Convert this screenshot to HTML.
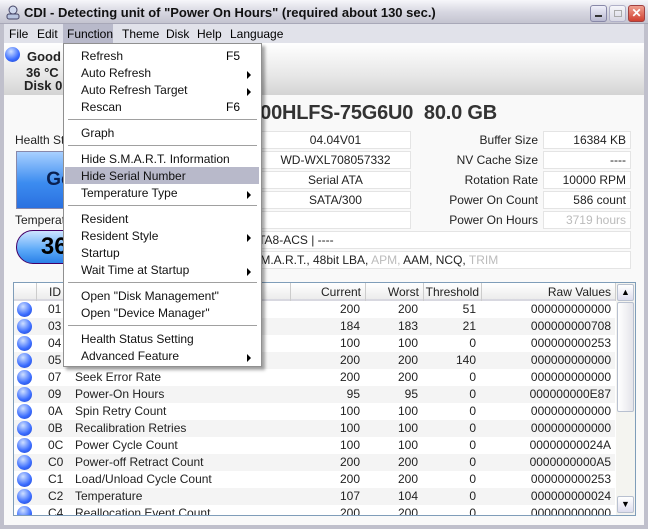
<!DOCTYPE html>
<html><head><style>
*{box-sizing:border-box;margin:0;padding:0}
body{width:648px;height:529px;overflow:hidden;font-family:"Liberation Sans",sans-serif;font-size:12px;color:#000;background:#fff;position:relative}
.a{position:absolute}
#frame{left:0;top:0;width:648px;height:529px;border:4px solid #c0c0cc;border-top:none;background:#f9f9f9}
#title{left:0;top:0;width:648px;height:24px;background:linear-gradient(#f6f6fa,#d8d8e2 50%,#c4c4d0);border-bottom:1px solid #a8a8b8}
#title span{position:absolute;left:24px;top:5px;font-weight:bold;font-size:13px;color:#111}
#menu{left:4px;top:24px;width:640px;height:19px;background:#e1e2ea}
#menu span{position:absolute;top:3px}
#dbar{left:4px;top:43px;width:640px;height:52px;background:linear-gradient(#fff,#e8e8e8 60%,#d4d4d4)}
.box{position:absolute;height:18px;border:1px solid #e4e4e4;background:#fff;text-align:center;line-height:16px;color:#222;font-size:12px}
.lbl{position:absolute;text-align:right;width:200px;color:#222}
#tbl{left:13px;top:282px;width:623px;height:234px;border:1px solid #7f9db9;background:#fff;overflow:hidden}
.hd{position:absolute;top:0;height:18px;line-height:18px;color:#222;border-right:1px solid #ccc;text-align:right;padding-right:4px;white-space:nowrap}
.row{position:absolute;left:0;width:601px;height:17px;line-height:17px;color:#222}
.row:nth-child(even){background:#f4f4f4}
.row span{position:absolute}
.dot{left:3px;top:1px;width:15px;height:15px;border-radius:50%;background:radial-gradient(circle at 40% 30%,#cfe0ff,#3a6cff 60%,#2040c0)}
#pop{left:63px;top:43px;width:199px;height:324px;background:#fff;border:1px solid #909090;box-shadow:3px 3px 3px rgba(0,0,0,.35)}
.mi{position:absolute;left:17px;color:#111}
.sep{position:absolute;left:4px;width:189px;height:1px;background:#a0a0a0}
.ar{position:absolute;left:183px;width:0;height:0;border-left:4px solid #000;border-top:4px solid transparent;border-bottom:4px solid transparent}
.k{position:absolute;left:162px}
</style></head><body>
<div id="frame" class="a"></div>
<div id="title" class="a">
<svg class="a" style="left:5px;top:4px" width="16" height="16"><circle cx="8" cy="6" r="4" fill="#cfd8ee" stroke="#446"/><rect x="2" y="10" width="12" height="5" rx="2" fill="#b8c4e0" stroke="#446"/></svg>
<span>CDI - Detecting unit of "Power On Hours" (required about 130 sec.)</span>
<div class="a" style="left:590px;top:5px;width:17px;height:17px;border-radius:3px;background:linear-gradient(#f0f0fa,#b8b8d0);border:1px solid #8888a8"><div class="a" style="left:4px;top:9px;width:7px;height:2px;background:#333"></div></div>
<div class="a" style="left:609px;top:5px;width:17px;height:17px;border-radius:3px;background:linear-gradient(#f6f6fa,#d8d8e4);border:1px solid #b0b0c8"><div class="a" style="left:4px;top:4px;width:8px;height:7px;border:1px solid #aaa"></div></div>
<div class="a" style="left:628px;top:5px;width:17px;height:17px;border-radius:3px;background:linear-gradient(#f0a090,#d04030);border:1px solid #a04040;color:#fff;font-weight:bold;font-size:12px;text-align:center;line-height:15px">✕</div>
</div>
<div id="menu" class="a">
<span style="left:5px">File</span><span style="left:33px">Edit</span>
<div class="a" style="left:59px;top:0;width:50px;height:19px;background:#b8b9ca"></div>
<span style="left:63px">Function</span><span style="left:118px">Theme</span><span style="left:162px">Disk</span><span style="left:193px">Help</span><span style="left:226px">Language</span>
</div>
<div id="dbar" class="a">
<div class="a" style="left:1px;top:4px;width:15px;height:15px;border-radius:50%;background:radial-gradient(circle at 40% 30%,#cfe0ff,#3a6cff 60%,#2040c0)"></div>
<div class="a" style="left:23px;top:6px;font-weight:bold;font-size:13px;color:#222">Good</div>
<div class="a" style="left:22px;top:22px;font-weight:bold;font-size:13px;color:#222">36 °C</div>
<div class="a" style="left:20px;top:35px;font-weight:bold;font-size:13px;color:#222">Disk 0</div>
</div>
<div class="a" style="left:100px;top:102px;width:397px;text-align:right;font-weight:bold;font-size:20px;color:#333;white-space:nowrap;letter-spacing:-0.2px">WDC WD800HLFS-75G6U0&nbsp; 80.0 GB</div>
<div class="a" style="left:15px;top:133px;color:#222">Health Status</div>
<div class="a" style="left:16px;top:151px;width:110px;height:58px;border:1px solid #88a;background:linear-gradient(#a8d0ff,#3c8cf0 55%,#2a70e0);font-weight:bold;font-size:19px;color:#0a2050;text-align:center;line-height:56px">Good</div>
<div class="a" style="left:15px;top:213px;color:#222">Temperature</div>
<div class="a" style="left:16px;top:230px;width:110px;height:34px;border-radius:17px;border:1px solid #406;background:linear-gradient(#cce4ff,#5aa8f8 60%,#2a80e8);font-weight:bold;font-size:24px;color:#000;text-align:center;line-height:32px">36 °C</div>
<div class="box" style="left:260px;top:131px;width:151px">04.04V01</div>
<div class="box" style="left:260px;top:151px;width:151px">WD-WXL708057332</div>
<div class="box" style="left:260px;top:171px;width:151px">Serial ATA</div>
<div class="box" style="left:260px;top:191px;width:151px">SATA/300</div>
<div class="box" style="left:260px;top:211px;width:151px"></div>
<div class="lbl" style="left:338px;top:133px">Buffer Size</div>
<div class="lbl" style="left:338px;top:153px">NV Cache Size</div>
<div class="lbl" style="left:338px;top:173px">Rotation Rate</div>
<div class="lbl" style="left:338px;top:193px">Power On Count</div>
<div class="lbl" style="left:338px;top:213px">Power On Hours</div>
<div class="box" style="left:543px;top:131px;width:88px;text-align:right;padding-right:4px">16384 KB</div>
<div class="box" style="left:543px;top:151px;width:88px;text-align:right;padding-right:4px">----</div>
<div class="box" style="left:543px;top:171px;width:88px;text-align:right;padding-right:4px">10000 RPM</div>
<div class="box" style="left:543px;top:191px;width:88px;text-align:right;padding-right:4px">586 count</div>
<div class="box" style="left:543px;top:211px;width:88px;text-align:right;padding-right:4px;color:#bbb">3719 hours</div>
<div class="box" style="left:240px;top:231px;width:391px;text-align:left;padding-left:10px">ATA8-ACS | ----</div>
<div class="box" style="left:240px;top:251px;width:391px;text-align:left;padding-left:8px">S.M.A.R.T., 48bit LBA, <span style="color:#bbb">APM,</span> AAM, NCQ, <span style="color:#bbb">TRIM</span></div>
<div id="tbl" class="a">
<div class="a" style="left:0;top:0;width:602px;height:18px;background:linear-gradient(#fff,#ececec);border-bottom:2px solid #d8d8e0"></div>
<div class="hd" style="left:0;width:23px"></div>
<div class="hd" style="left:23px;width:34px;text-align:left;padding-left:12px">ID</div>
<div class="hd" style="left:57px;width:220px"></div>
<div class="hd" style="left:277px;width:75px">Current</div>
<div class="hd" style="left:352px;width:58px">Worst</div>
<div class="hd" style="left:410px;width:58px;padding-right:2px">Threshold</div>
<div class="hd" style="left:468px;width:134px">Raw Values</div>
<div class="a" style="left:0;top:18px;width:602px">
<div class="row" style="top:0"><div class="a dot"></div><span style="left:34px">01</span><span style="left:61px">Read Error Rate</span><span style="left:272px;width:74px;text-align:right">200</span><span style="left:346px;width:58px;text-align:right">200</span><span style="left:404px;width:58px;text-align:right">51</span><span style="left:462px;width:135px;text-align:right">000000000000</span></div>
<div class="row" style="top:17px"><div class="a dot"></div><span style="left:34px">03</span><span style="left:61px">Spin-Up Time</span><span style="left:272px;width:74px;text-align:right">184</span><span style="left:346px;width:58px;text-align:right">183</span><span style="left:404px;width:58px;text-align:right">21</span><span style="left:462px;width:135px;text-align:right">000000000708</span></div>
<div class="row" style="top:34px"><div class="a dot"></div><span style="left:34px">04</span><span style="left:61px">Start/Stop Count</span><span style="left:272px;width:74px;text-align:right">100</span><span style="left:346px;width:58px;text-align:right">100</span><span style="left:404px;width:58px;text-align:right">0</span><span style="left:462px;width:135px;text-align:right">000000000253</span></div>
<div class="row" style="top:51px"><div class="a dot"></div><span style="left:34px">05</span><span style="left:61px">Reallocated Sectors Count</span><span style="left:272px;width:74px;text-align:right">200</span><span style="left:346px;width:58px;text-align:right">200</span><span style="left:404px;width:58px;text-align:right">140</span><span style="left:462px;width:135px;text-align:right">000000000000</span></div>
<div class="row" style="top:68px"><div class="a dot"></div><span style="left:34px">07</span><span style="left:61px">Seek Error Rate</span><span style="left:272px;width:74px;text-align:right">200</span><span style="left:346px;width:58px;text-align:right">200</span><span style="left:404px;width:58px;text-align:right">0</span><span style="left:462px;width:135px;text-align:right">000000000000</span></div>
<div class="row" style="top:85px"><div class="a dot"></div><span style="left:34px">09</span><span style="left:61px">Power-On Hours</span><span style="left:272px;width:74px;text-align:right">95</span><span style="left:346px;width:58px;text-align:right">95</span><span style="left:404px;width:58px;text-align:right">0</span><span style="left:462px;width:135px;text-align:right">000000000E87</span></div>
<div class="row" style="top:102px"><div class="a dot"></div><span style="left:34px">0A</span><span style="left:61px">Spin Retry Count</span><span style="left:272px;width:74px;text-align:right">100</span><span style="left:346px;width:58px;text-align:right">100</span><span style="left:404px;width:58px;text-align:right">0</span><span style="left:462px;width:135px;text-align:right">000000000000</span></div>
<div class="row" style="top:119px"><div class="a dot"></div><span style="left:34px">0B</span><span style="left:61px">Recalibration Retries</span><span style="left:272px;width:74px;text-align:right">100</span><span style="left:346px;width:58px;text-align:right">100</span><span style="left:404px;width:58px;text-align:right">0</span><span style="left:462px;width:135px;text-align:right">000000000000</span></div>
<div class="row" style="top:136px"><div class="a dot"></div><span style="left:34px">0C</span><span style="left:61px">Power Cycle Count</span><span style="left:272px;width:74px;text-align:right">100</span><span style="left:346px;width:58px;text-align:right">100</span><span style="left:404px;width:58px;text-align:right">0</span><span style="left:462px;width:135px;text-align:right">00000000024A</span></div>
<div class="row" style="top:153px"><div class="a dot"></div><span style="left:34px">C0</span><span style="left:61px">Power-off Retract Count</span><span style="left:272px;width:74px;text-align:right">200</span><span style="left:346px;width:58px;text-align:right">200</span><span style="left:404px;width:58px;text-align:right">0</span><span style="left:462px;width:135px;text-align:right">0000000000A5</span></div>
<div class="row" style="top:170px"><div class="a dot"></div><span style="left:34px">C1</span><span style="left:61px">Load/Unload Cycle Count</span><span style="left:272px;width:74px;text-align:right">200</span><span style="left:346px;width:58px;text-align:right">200</span><span style="left:404px;width:58px;text-align:right">0</span><span style="left:462px;width:135px;text-align:right">000000000253</span></div>
<div class="row" style="top:187px"><div class="a dot"></div><span style="left:34px">C2</span><span style="left:61px">Temperature</span><span style="left:272px;width:74px;text-align:right">107</span><span style="left:346px;width:58px;text-align:right">104</span><span style="left:404px;width:58px;text-align:right">0</span><span style="left:462px;width:135px;text-align:right">000000000024</span></div>
<div class="row" style="top:204px"><div class="a dot"></div><span style="left:34px">C4</span><span style="left:61px">Reallocation Event Count</span><span style="left:272px;width:74px;text-align:right">200</span><span style="left:346px;width:58px;text-align:right">200</span><span style="left:404px;width:58px;text-align:right">0</span><span style="left:462px;width:135px;text-align:right">000000000000</span></div>
</div>
<div class="a" style="left:602px;top:0;width:19px;height:232px;background:#f4f4f0">
<div class="a" style="left:1px;top:1px;width:17px;height:17px;border:1px solid #b8c0d0;border-radius:2px;background:linear-gradient(#fff,#dde);text-align:center;font-size:9px;line-height:15px">▲</div>
<div class="a" style="left:1px;top:19px;width:17px;height:110px;border:1px solid #b8c0d0;border-radius:2px;background:linear-gradient(90deg,#fff,#e4e4ea)"></div>
<div class="a" style="left:1px;top:213px;width:17px;height:17px;border:1px solid #b8c0d0;border-radius:2px;background:linear-gradient(#fff,#dde);text-align:center;font-size:9px;line-height:15px">▼</div>
</div>
</div>
<div id="pop" class="a">
<div class="mi" style="top:5px">Refresh</div><div class="k" style="top:5px">F5</div>
<div class="mi" style="top:22px">Auto Refresh</div><div class="ar" style="top:27px"></div>
<div class="mi" style="top:39px">Auto Refresh Target</div><div class="ar" style="top:44px"></div>
<div class="mi" style="top:56px">Rescan</div><div class="k" style="top:56px">F6</div>
<div class="sep" style="top:75px"></div>
<div class="mi" style="top:82px">Graph</div>
<div class="sep" style="top:101px"></div>
<div class="mi" style="top:108px">Hide S.M.A.R.T. Information</div>
<div class="a" style="left:1px;top:123px;width:194px;height:17px;background:#b8b9ca"></div>
<div class="mi" style="top:125px">Hide Serial Number</div>
<div class="mi" style="top:142px">Temperature Type</div><div class="ar" style="top:147px"></div>
<div class="sep" style="top:161px"></div>
<div class="mi" style="top:168px">Resident</div>
<div class="mi" style="top:185px">Resident Style</div><div class="ar" style="top:190px"></div>
<div class="mi" style="top:202px">Startup</div>
<div class="mi" style="top:219px">Wait Time at Startup</div><div class="ar" style="top:224px"></div>
<div class="sep" style="top:238px"></div>
<div class="mi" style="top:245px">Open "Disk Management"</div>
<div class="mi" style="top:262px">Open "Device Manager"</div>
<div class="sep" style="top:281px"></div>
<div class="mi" style="top:288px">Health Status Setting</div>
<div class="mi" style="top:305px">Advanced Feature</div><div class="ar" style="top:310px"></div>
</div>
</body></html>
